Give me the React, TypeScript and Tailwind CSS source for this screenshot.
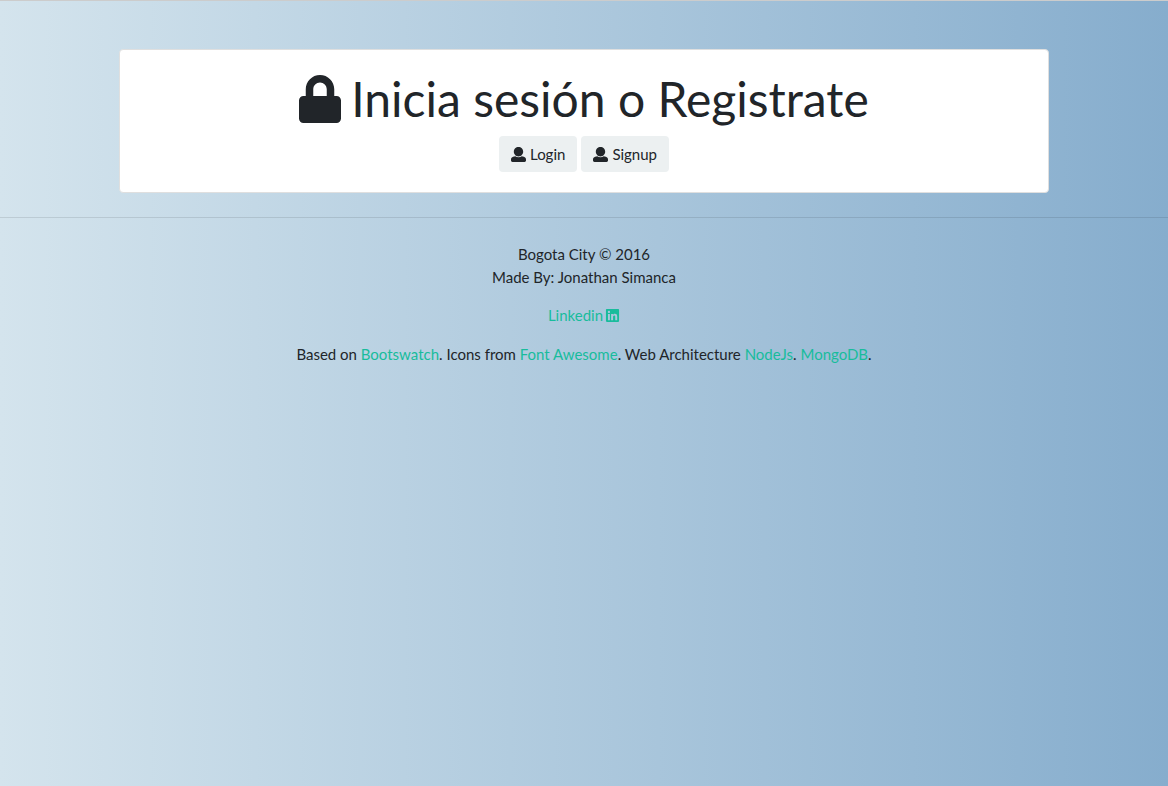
import { FaLock, FaLinkedin } from "react-icons/fa";

const link = "text-[#18bc9c] hover:underline";
const button =
  "inline-flex items-center gap-1 rounded-[4px] bg-[#ecf0f1] px-3 py-[7px] leading-[22px] text-[#212529]";

function UserIcon() {
  return (
    <svg viewBox="0 0 512 512" fill="currentColor" aria-hidden="true" className="size-[15px]">
      <path d="M256 0c88.366 0 160 71.634 160 160s-71.634 160-160 160S96 248.366 96 160 167.634 0 256 0zm183.283 333.821l-71.313-17.828c-74.923 53.89-165.738 41.864-223.94 0l-71.313 17.828C29.981 344.505 0 382.903 0 426.955V464c0 26.51 21.49 48 48 48h416c26.51 0 48-21.49 48-48v-37.045c0-44.052-29.981-82.45-72.717-93.134z" />
    </svg>
  );
}

export default function App() {
  return (
    <div className="min-h-screen border-t border-[#cccccc] bg-[linear-gradient(to_right,#d4e4ed,#86adcd)] font-[Lato,sans-serif] text-[15px] leading-[23px] text-[#212529]">
      <main className="mx-auto max-w-[960px] px-[15px] pt-12">
        <section className="rounded-[4px] border border-[#dfdfdf] bg-white p-5 text-center">
          <h1 className="mb-2 flex items-center justify-center gap-[10px] text-5xl leading-[58px]">
            <FaLock aria-hidden="true" className="h-12 w-[42px]" />
            Inicia sesión o Registrate
          </h1>
          <div className="flex justify-center gap-1">
            <button type="button" className={button}>
              <UserIcon />
              Login
            </button>
            <button type="button" className={button}>
              <UserIcon />
              Signup
            </button>
          </div>
        </section>
      </main>
      <hr className="mt-6 mb-[25px] border-black/10" />
      <footer className="text-center">
        <p className="mb-[15px]">
          Bogota City © 2016
          <br />
          Made By: Jonathan Simanca
        </p>
        <p className="mb-4">
          <a href="#linkedin" className="inline-flex items-center gap-0.5 align-top text-[#18bc9c] hover:underline">
            Linkedin
            <FaLinkedin aria-hidden="true" />
          </a>
        </p>
        <p>
          Based on <a href="#bootswatch" className={link}>Bootswatch</a>. Icons from{" "}
          <a href="#font-awesome" className={link}>Font Awesome</a>. Web Architecture{" "}
          <a href="#nodejs" className={link}>NodeJs</a>. <a href="#mongodb" className={link}>MongoDB</a>.
        </p>
      </footer>
    </div>
  );
}
